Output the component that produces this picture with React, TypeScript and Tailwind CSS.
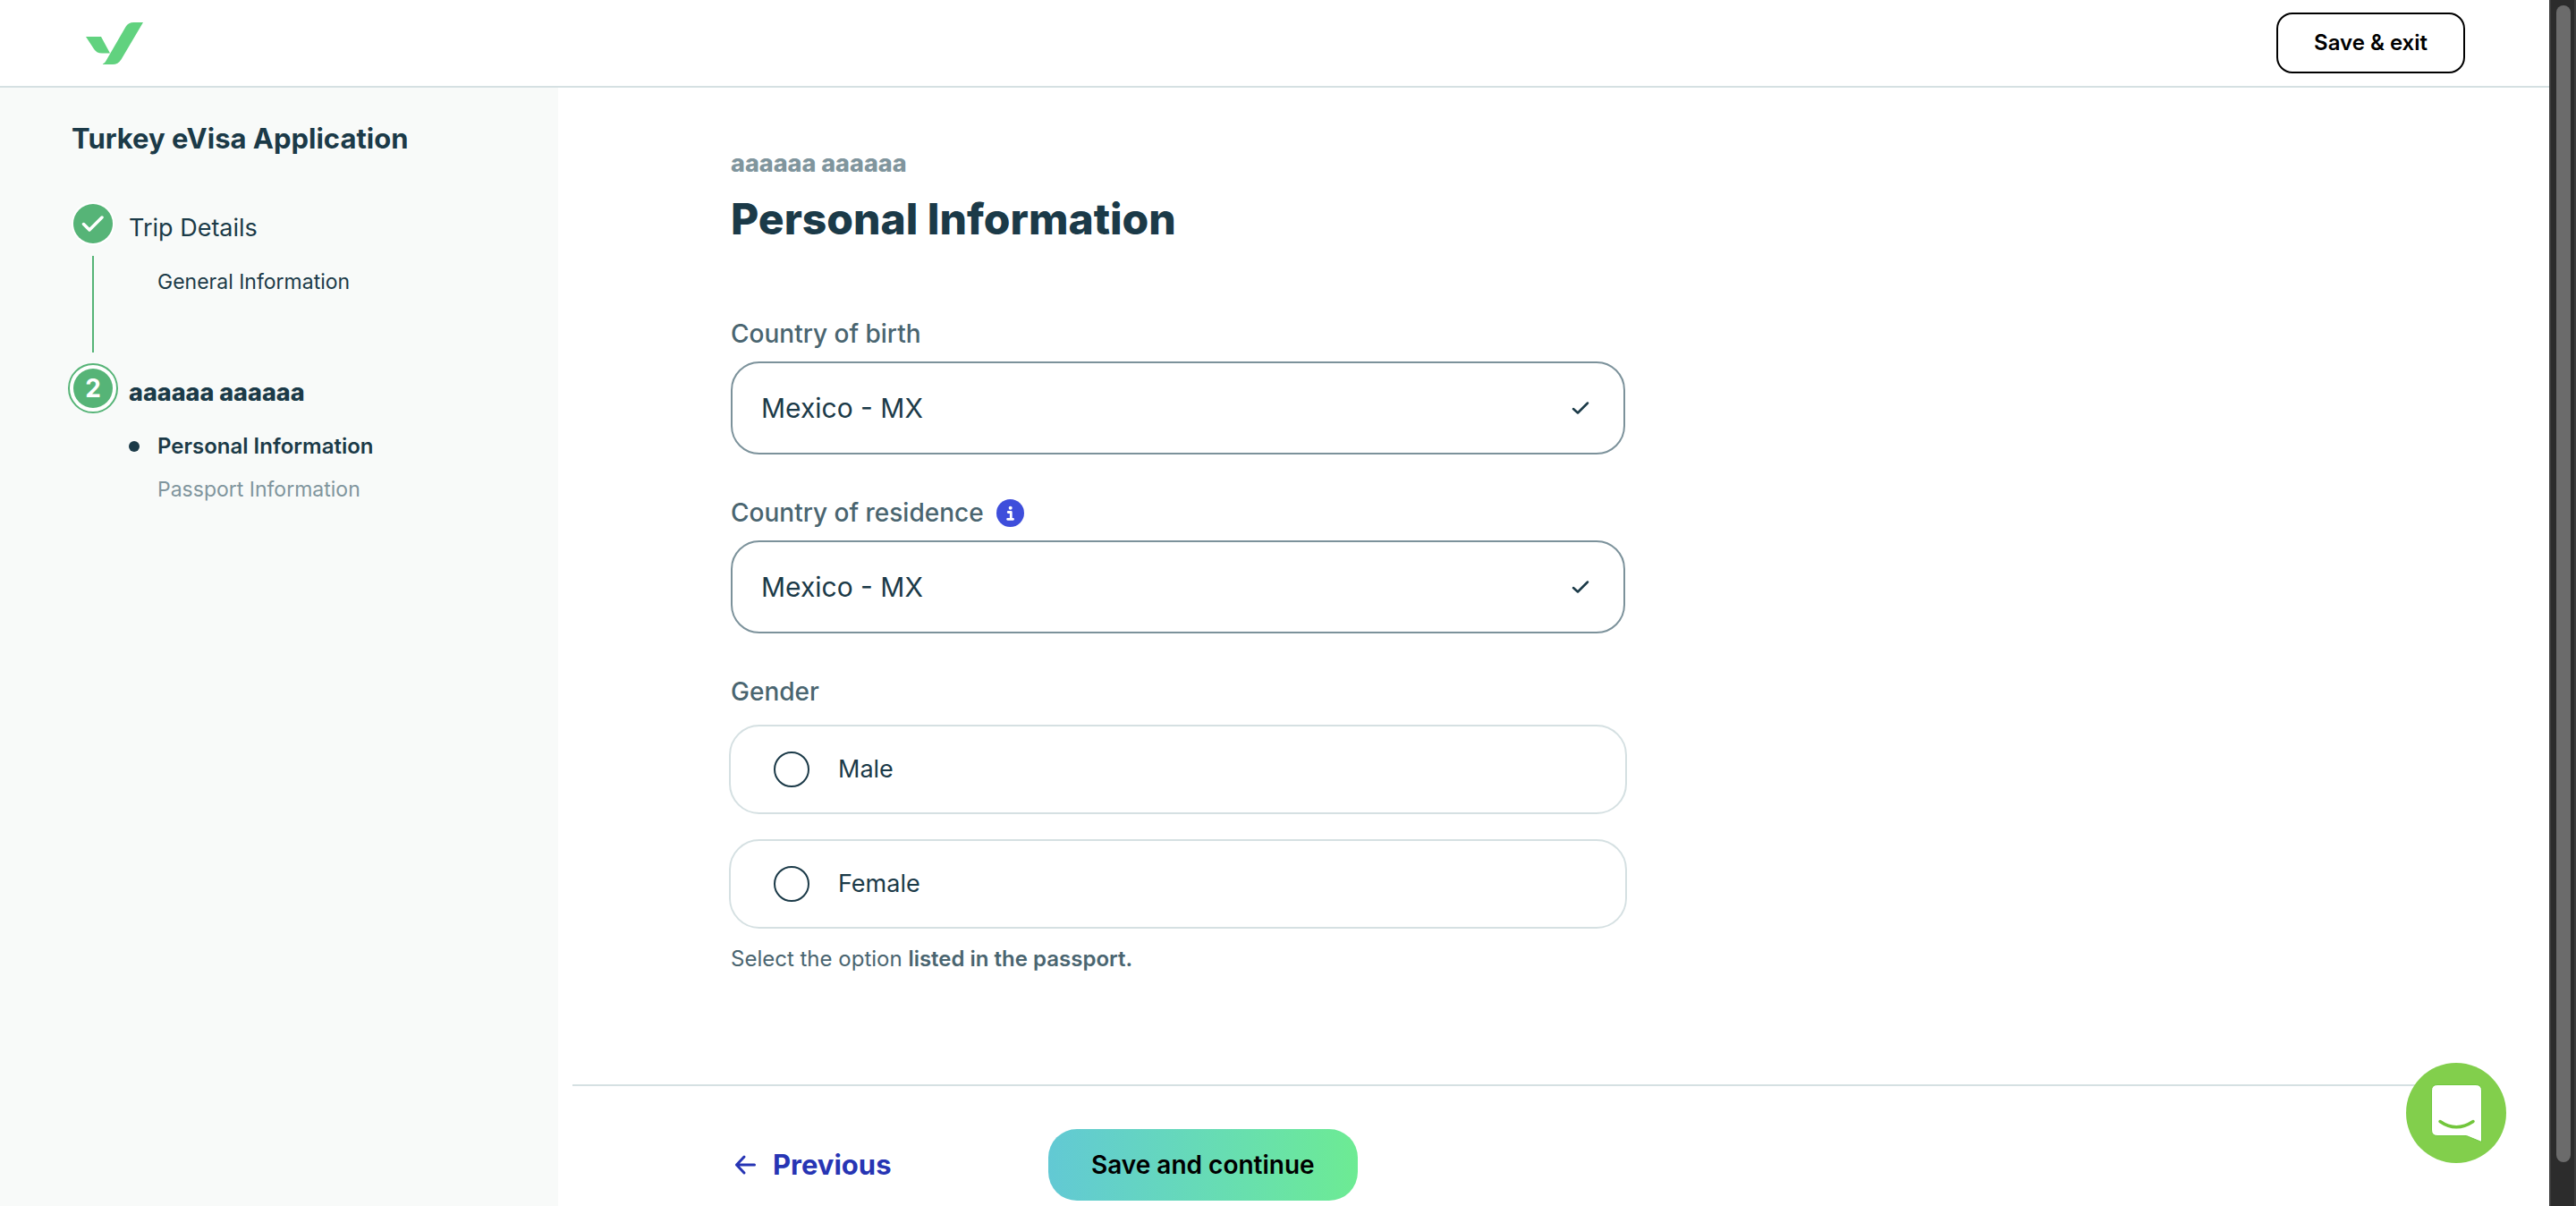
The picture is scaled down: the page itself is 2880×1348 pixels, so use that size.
import { useId } from 'react';

function Logo() {
  return (
    <svg viewBox="0 0 64 47" className="h-[47px] w-16" fill="#61d27f" aria-hidden="true">
      <path d="M0 16H17L27 34.5H18Q11.500 34.5 8.500 29Z" />
      <path d="M64 0H53.500Q47.500 0 44.500 5L22.500 43Q21 46 19 46.500V47H30Q36 47 39.500 41.500Z" />
    </svg>
  );
}

function CheckIcon() {
  return (
    <svg viewBox="0 0 20 16" className="h-4 w-5 shrink-0" fill="none" stroke="#1b3a48" strokeWidth="2.500" strokeLinecap="round" strokeLinejoin="round" aria-hidden="true">
      <path d="M2 9L7 13.500L18 2.500" />
    </svg>
  );
}

function InfoIcon() {
  return (
    <svg viewBox="0 0 31 31" className="size-[31px]" aria-hidden="true">
      <circle cx="15.500" cy="15.500" r="15.500" fill="#3e4edb" />
      <circle cx="15.700" cy="9.800" r="2" fill="#fff" />
      <path d="M13.200 14.500H16.300V22.300M12.600 22.300H18.600" fill="none" stroke="#fff" strokeWidth="2.800" strokeLinecap="round" strokeLinejoin="round" />
    </svg>
  );
}

function CountryField({ label, info = false }: { label: string; info?: boolean }) {
  const id = useId();
  return (
    <div>
      <div className="flex items-center gap-3.5">
        <label htmlFor={id} className="text-[28px] leading-10 font-medium text-[#4a6570]">
          {label}
        </label>
        {info && (
          <button type="button" aria-label="More about country of residence">
            <InfoIcon />
          </button>
        )}
      </div>
      <div className="mt-[11px] flex h-[104px] items-center rounded-[32px] border-2 border-[#7c929b] pr-[38px] pl-8">
        <input id={id} type="text" defaultValue="Mexico - MX" className="h-full min-w-0 flex-1 bg-transparent text-[30px] text-[#1b3a48] outline-none" />
        <CheckIcon />
      </div>
    </div>
  );
}

function GenderOption({ label }: { label: string }) {
  return (
    <label className="flex h-[100px] items-center gap-8 rounded-[34px] border-2 border-[#d5e0e2] px-12 text-[27px] leading-10 text-[#1b3a48]">
      <input type="radio" name="gender" value={label} className="size-10 shrink-0 appearance-none rounded-full border-2 border-[#1b3a48] bg-white checked:border-[12px]" />
      {label}
    </label>
  );
}

function Sidebar() {
  return (
    <aside className="w-[624px] shrink-0 bg-[#f8faf9] px-[76px] pt-[37px] text-[#1b3a48]">
      <h2 className="pl-1 text-[31px] leading-10 font-bold">Turkey eVisa Application</h2>
      <ol className="mt-[47px]">
        <li className="flex h-[184px] gap-3">
          <div className="flex w-14 flex-col items-center">
            <span className="flex size-14 items-center justify-center">
              <svg viewBox="0 0 48 48" className="size-12" role="img" aria-label="Completed">
                <circle cx="24" cy="24" r="24" fill="#fff" />
                <circle cx="24" cy="24" r="22" fill="#56b477" />
                <path d="M13.500 24.500L20 31L34 17" fill="none" stroke="#fff" strokeWidth="3.500" strokeLinecap="round" strokeLinejoin="round" />
              </svg>
            </span>
            <span className="mt-2 mb-3 w-0.5 flex-1 bg-[#56b477]" />
          </div>
          <div className="pt-[13px]">
            <p className="text-[27px] leading-10">Trip Details</p>
            <a href="#general" className="mt-6 block pl-8 text-[23px] leading-8">General Information</a>
          </div>
        </li>
        <li className="flex gap-3">
          <span className="flex size-14 items-center justify-center rounded-full border-2 border-[#56b477] bg-white">
            <span className="flex size-11 items-center justify-center rounded-full bg-[#56b477] text-[28px] leading-none font-bold text-white">2</span>
          </span>
          <div className="pt-[13px]">
            <p className="text-[27px] leading-10 font-extrabold">aaaaaa aaaaaa</p>
            <a href="#personal" aria-current="step" className="mt-6 flex items-center gap-5 text-[24px] leading-8 font-semibold">
              <span className="size-3 rounded-full bg-[#1b3a48]" />
              Personal Information
            </a>
            <a href="#passport" className="mt-4 block pl-8 text-[23px] leading-8 text-[#80959d]">Passport Information</a>
          </div>
        </li>
      </ol>
    </aside>
  );
}

function ChatButton() {
  return (
    <button type="button" aria-label="Open chat" className="fixed right-[78px] bottom-12 size-28 rounded-full">
      <svg viewBox="0 0 112 112" className="size-28" aria-hidden="true">
        <circle cx="56" cy="56" r="56" fill="#82cf4c" />
        <path d="M35 24.500H78Q84.500 24.500 84.500 31V88.500L67.500 81.500H35Q28.500 81.500 28.500 75V31Q28.500 24.500 35 24.500Z" fill="#fff" stroke="#6fc73e" strokeWidth="1" />
        <path d="M38 65.500Q56 78 75 65.500" fill="none" stroke="#72c63c" strokeWidth="3.500" strokeLinecap="round" />
      </svg>
    </button>
  );
}

export default function App() {
  return (
    <div className="flex min-h-screen bg-white font-['Inter',sans-serif]">
      <div className="flex min-w-0 flex-1 flex-col">
        <header className="flex h-[98px] items-center justify-between border-b-2 border-[#d5e0e2] pr-[94px] pl-24">
          <a href="#home" aria-label="Home">
            <Logo />
          </a>
          <button type="button" className="h-[68px] rounded-[18px] border-2 border-black px-10 text-[24px] font-semibold text-black">
            Save &amp; exit
          </button>
        </header>
        <div className="flex flex-1">
          <Sidebar />
          <main className="flex min-w-0 flex-1 flex-col pl-4">
            <form id="personal-form" className="flex-1 pt-[65px] pl-[177px]">
              <p className="text-[27px] leading-10 font-extrabold text-[#80959d]">aaaaaa aaaaaa</p>
              <h1 className="mt-3 text-[48px] leading-[60px] font-extrabold text-[#1b3a48]">Personal Information</h1>
              <div className="mt-[78px] flex max-w-[1000px] flex-col gap-[45px]">
                <CountryField label="Country of birth" />
                <CountryField label="Country of residence" info />
                <fieldset>
                  <legend className="text-[28px] leading-10 font-medium text-[#4a6570]">Gender</legend>
                  <div className="-mx-0.5 mt-[17px] flex flex-col gap-7">
                    <GenderOption label="Male" />
                    <GenderOption label="Female" />
                  </div>
                  <p className="mt-[18px] text-[24px] leading-8 text-[#4a6570]">
                    Select the option <strong className="font-semibold">listed in the passport.</strong>
                  </p>
                </fieldset>
              </div>
            </form>
            <footer className="mr-[94px] flex items-center border-t-2 border-[#d5e0e2] pt-12 pb-1.5 pl-[177px]">
              <div className="w-[355px]">
                <button type="button" className="flex h-20 items-center gap-[18px] pl-[3px] text-[31px] font-bold text-[#2735b4]">
                  <svg viewBox="0 0 26 24" className="h-6 w-[26px]" fill="none" stroke="#2735b4" strokeWidth="3" strokeLinecap="round" strokeLinejoin="round" aria-hidden="true">
                    <path d="M23.500 12H3.500M12 3L3.500 12L12 21" />
                  </svg>
                  Previous
                </button>
              </div>
              <button type="submit" form="personal-form" className="h-20 rounded-[32px] bg-linear-to-r from-[#62c9d4] to-[#6deb93] px-12 text-[28px] font-semibold text-black">
                Save and continue
              </button>
            </footer>
          </main>
        </div>
      </div>
      <div className="w-[30px] shrink-0 border-r-2 border-l-2 border-[#3d3d3d] bg-[#2c2c2c] px-[6px] pt-[6px] pb-[49px]" aria-hidden="true">
        <div className="h-full w-4 rounded-full bg-[#6b6b6b]" />
      </div>
      <ChatButton />
    </div>
  );
}
